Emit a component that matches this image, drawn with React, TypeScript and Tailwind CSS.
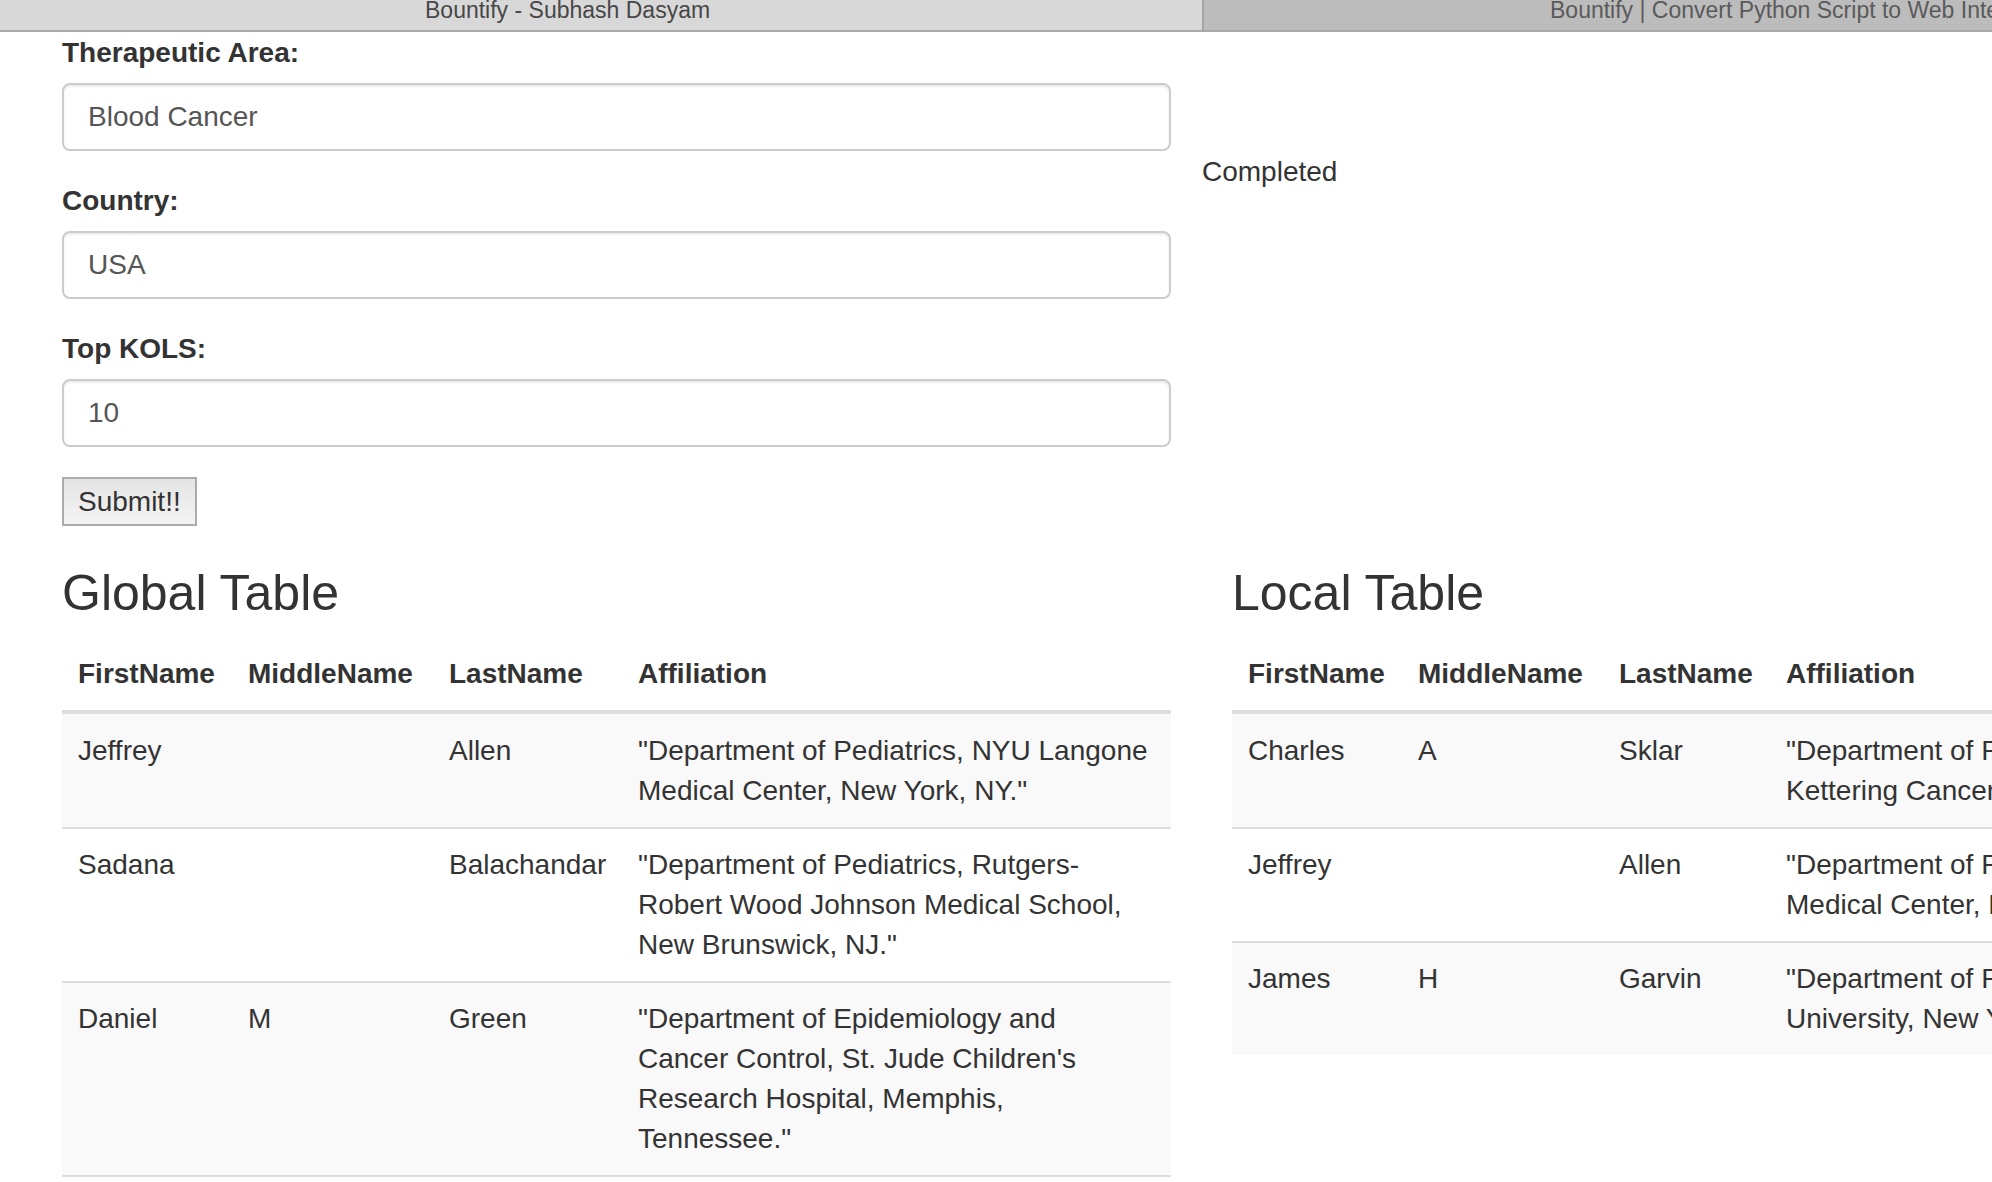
import React from 'react';

type Row = {
  first: string;
  middle: string;
  last: string;
  affiliation: string[];
};

const globalRows: Row[] = [
  {
    first: 'Jeffrey',
    middle: '',
    last: 'Allen',
    affiliation: ['"Department of Pediatrics, NYU Langone', 'Medical Center, New York, NY."'],
  },
  {
    first: 'Sadana',
    middle: '',
    last: 'Balachandar',
    affiliation: ['"Department of Pediatrics, Rutgers-', 'Robert Wood Johnson Medical School,', 'New Brunswick, NJ."'],
  },
  {
    first: 'Daniel',
    middle: 'M',
    last: 'Green',
    affiliation: [
      '"Department of Epidemiology and',
      "Cancer Control, St. Jude Children's",
      'Research Hospital, Memphis,',
      'Tennessee."',
    ],
  },
];

const localRows: Row[] = [
  {
    first: 'Charles',
    middle: 'A',
    last: 'Sklar',
    affiliation: ['"Department of Pediatrics, Memorial Sloan', 'Kettering Cancer Center, New York, NY."'],
  },
  {
    first: 'Jeffrey',
    middle: '',
    last: 'Allen',
    affiliation: ['"Department of Pediatrics, NYU Langone', 'Medical Center, New York, NY."'],
  },
  {
    first: 'James',
    middle: 'H',
    last: 'Garvin',
    affiliation: ['"Department of Pediatrics, Columbia', 'University, New York, NY."'],
  },
];

const TabBar: React.FC = () => (
  <div className="flex h-[32px] border-b-2 border-[#a9a9a9] text-[23px] leading-[20px] whitespace-nowrap overflow-hidden">
    <div className="w-[1202px] shrink-0 bg-[#d9d8d9] pl-[425px] text-[#474747]">Bountify - Subhash Dasyam</div>
    <div className="w-[2px] shrink-0 bg-[#a5a4a5]" />
    <div className="flex-1 bg-[#bdbcbd] pl-[346px] text-[#5a5a5a]">
      Bountify | Convert Python Script to Web Interface
    </div>
  </div>
);

const Field: React.FC<{ label: string; value: string }> = ({ label, value }) => (
  <div className="mb-[30px]">
    <label className="inline-block mb-[10px] font-bold">{label}</label>
    <input
      type="text"
      defaultValue={value}
      className="block w-full h-[68px] px-[24px] border-2 border-[#ccc] rounded-[8px] text-[#555] bg-white shadow-[inset_0_2px_2px_rgba(0,0,0,0.075)] outline-none"
    />
  </div>
);

const DataTable: React.FC<{ title: string; cols: string[]; rows: Row[]; lastBorder?: boolean }> = ({
  title,
  cols,
  rows,
  lastBorder,
}) => (
  <div className="w-[1109px] shrink-0">
    <h3 className="text-[50px] leading-[53px] font-medium mb-[18px]">{title}</h3>
    <table className="w-[1109px] table-fixed border-collapse">
      <colgroup>
        {cols.map((c, i) => (
          <col key={i} className={c} />
        ))}
      </colgroup>
      <thead>
        <tr>
          {['FirstName', 'MiddleName', 'LastName', 'Affiliation'].map((h) => (
            <th key={h} className="p-4 text-left align-bottom font-bold whitespace-nowrap border-b-4 border-[#ddd]">
              {h}
            </th>
          ))}
        </tr>
      </thead>
      <tbody>
        {rows.map((r, i) => {
          const bg = i % 2 === 0 ? 'bg-[#f9f9f9]' : 'bg-white';
          const bottom = lastBorder && i === rows.length - 1 ? 'border-b-2' : '';
          const top = i === 0 ? 'pt-[17px]' : '';
          const cell = `p-4 ${top} align-top border-t-2 border-[#ddd] ${bottom}`;
          return (
            <tr key={i} className={bg}>
              <td className={cell}>{r.first}</td>
              <td className={cell}>{r.middle}</td>
              <td className={cell}>{r.last}</td>
              <td className={`${cell} whitespace-nowrap`}>
                {r.affiliation.map((line, j) => (
                  <div key={j}>{line}</div>
                ))}
              </td>
            </tr>
          );
        })}
      </tbody>
    </table>
  </div>
);

export default function App() {
  return (
    <div className="h-screen w-full overflow-hidden bg-white text-[#333] text-[28px] leading-[40px] font-['Liberation_Sans',Arial,sans-serif]">
      <TabBar />

      <div className="flex pl-[62px] pt-[1px]">
        <form className="w-[1109px] shrink-0" onSubmit={(e) => e.preventDefault()}>
          <Field label="Therapeutic Area:" value="Blood Cancer" />
          <Field label="Country:" value="USA" />
          <Field label="Top KOLS:" value="10" />
          <button
            type="submit"
            className="block h-[49px] px-[14px] border-2 border-[#ababab] bg-linear-to-b from-[#e4e4e4] to-[#f4f4f4] leading-[32px] text-[#333]"
          >
            Submit!!
          </button>
        </form>
        <div className="shrink-0 pl-[31px] pt-[119px]">Completed</div>
      </div>

      <div className="flex items-start gap-[61px] pl-[62px] pt-[41px]">
        <DataTable
          title="Global Table"
          cols={['w-[170px]', 'w-[201px]', 'w-[189px]', 'w-[549px]']}
          rows={globalRows}
          lastBorder
        />
        <DataTable
          title="Local Table"
          cols={['w-[170px]', 'w-[201px]', 'w-[167px]', 'w-[571px]']}
          rows={localRows}
        />
      </div>
    </div>
  );
}
